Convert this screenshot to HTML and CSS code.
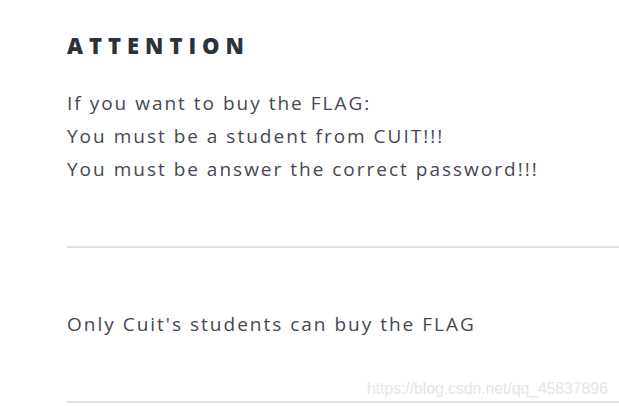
FILE: index.html
```html
<!DOCTYPE html>
<html>
<head>
<meta charset="utf-8">
<link rel="stylesheet" href="styles.css">
</head>
<body>
<div class="page">
  <h2 class="title">ATTENTION</h2>
  <p class="notice">If you want to buy the FLAG:<br>You must be a student from CUIT!!!<br>You must be answer the correct password!!!</p>
  <hr class="rule">
  <p class="only">Only Cuit's students can buy the FLAG</p>
  <hr class="rule">
</div>
<div class="watermark">https://blog.csdn.net/qq_45837896</div>
</body>
</html>
```
FILE: styles.css
```css
html, body {
  margin: 0;
  padding: 0;
  background: #fff;
}
body {
  font-family: "Open Sans", "Noto Sans", sans-serif;
  position: relative;
  width: 619px;
  height: 406px;
  overflow: hidden;
}
.page {
  padding: 30px 0 0 67px;
}
.title {
  margin: 0;
  font-size: 22px;
  font-weight: 800;
  letter-spacing: 6px;
  color: #2b323c;
  line-height: 30px;
}
.notice {
  margin: 27px 0 0;
  font-size: 19px;
  line-height: 33px;
  letter-spacing: 2px;
  color: #474752;
}
.rule {
  margin: 0;
  border: 0;
  border-top: 2px solid #e0e0e0;
  height: 0;
}
.notice + .rule {
  margin-top: 60px;
}
.only {
  margin: 60px 0 0;
  font-size: 19px;
  line-height: 33px;
  letter-spacing: 2px;
  color: #474752;
}
.only + .rule {
  margin-top: 60px;
}
.watermark {
  position: absolute;
  left: 367px;
  top: 380px;
  font-family: "Liberation Sans", Arial, sans-serif;
  font-size: 15.8px;
  letter-spacing: -0.05px;
  color: #e6e6e6;
}
```
